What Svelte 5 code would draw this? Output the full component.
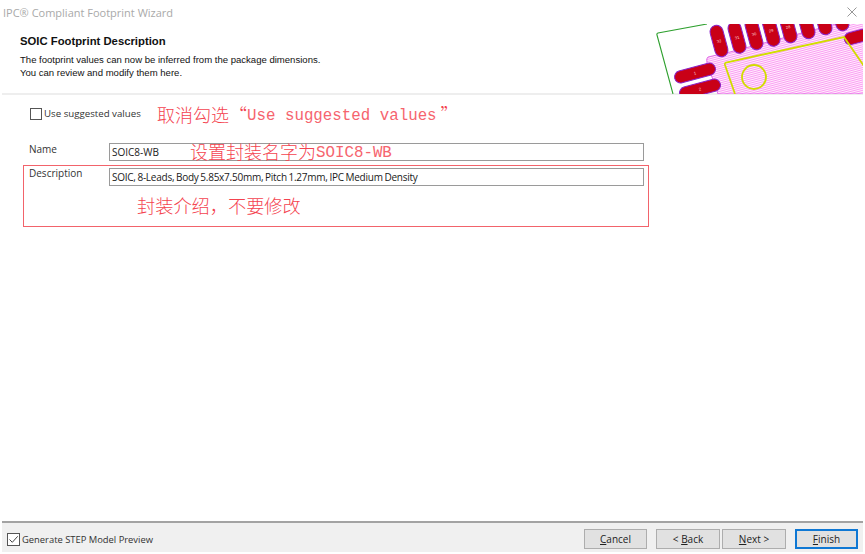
<script lang="ts">
  const topPads = [
    { x: 719, y: 41, n: '32' },
    { x: 737, y: 37.5, n: '31' },
    { x: 754, y: 34, n: '30' },
    { x: 771, y: 30.5, n: '29' },
    { x: 788, y: 27, n: '28' },
    { x: 806, y: 23, n: '' },
    { x: 823, y: 19, n: '' },
    { x: 840, y: 15, n: '' },
  ]
  const leftPads = [
    { x: 695, y: 73, n: '1' },
    { x: 700, y: 89, n: '2' },
  ]
</script>

<div class="window">
  <header class="head">
    <div class="head-text">
      <div class="title-bar">IPC® Compliant Footprint Wizard</div>
      <div class="head-copy">
        <h1>SOIC Footprint Description</h1>
        <p>The footprint values can now be inferred from the package dimensions.</p>
        <p>You can review and modify them here.</p>
      </div>
    </div>
    <div class="head-side">
      <svg class="close" width="10" height="10" viewBox="0 0 10 10">
        <path d="M0.5 0.5 L9.5 9.5 M9.5 0.5 L0.5 9.5" stroke="#8c8c8c" stroke-width="0.9" fill="none" />
      </svg>
      <svg class="art" width="208" height="70" viewBox="655 24 208 70">
        <defs>
          <pattern id="hatch" width="2" height="2" patternUnits="userSpaceOnUse" patternTransform="rotate(-15)">
            <rect width="2" height="2" fill="#fff0fd" />
            <path d="M0 0.5 H2" stroke="#fb9df3" stroke-width="1" />
          </pattern>
        </defs>
        <path d="M707 24 L658 33 Q656.500 33.500 657 35 L673 94" fill="none" stroke="#2ea02e" stroke-width="1.100" />
        <path d="M708 57 L730 52 L870 15 L870 94 L718 94 L707 63 Q706 58 708 57 Z" fill="url(#hatch)" stroke="#d84fe0" stroke-width="0.800" />
        {#each topPads as p}
          <g transform="translate({p.x} {p.y}) rotate(-15)">
            <rect x="-6.500" y="-16" width="13" height="32" rx="6.500" fill="#c90017" stroke="#8a22c8" stroke-width="1" />
            {#if p.n}<text class="pin" y="1.500" text-anchor="middle">{p.n}</text>{/if}
          </g>
        {/each}
        <g transform="translate(860 36) rotate(-15)">
          <rect x="-16" y="-6" width="32" height="12" rx="6" fill="#c90017" stroke="#8a22c8" stroke-width="1" />
        </g>
        {#each leftPads as p}
          <g transform="translate({p.x} {p.y}) rotate(-15)">
            <rect x="-21" y="-6" width="42" height="12" rx="6" fill="#c90017" stroke="#8a22c8" stroke-width="1" />
            <text class="pin" y="1.500" text-anchor="middle">{p.n}</text>
          </g>
        {/each}
        <path d="M735 94 L725 65 Q724.500 63 726 62.500 L844 37 L864 66" fill="none" stroke="#d2dc00" stroke-width="1.800" />
        <circle cx="754" cy="77" r="12" fill="none" stroke="#d2dc00" stroke-width="1.800" />
      </svg>
    </div>
  </header>

  <main class="body">
    <label class="suggest"><span class="box"></span>Use suggested values</label>
    <div class="field name-field">
      <span class="field-label">Name</span>
      <div class="input">SOIC8-WB</div>
    </div>
    <div class="field desc-field">
      <span class="field-label">Description</span>
      <div class="input tight">SOIC, 8-Leads, Body 5.85x7.50mm, Pitch 1.27mm, IPC Medium Density</div>
    </div>

    <div class="red-box"></div>
    <span class="note note-a" lang="zh-CN">取消勾选“<span class="latin">Use suggested values</span><span class="end-quote">”</span></span>
    <span class="note note-b" lang="zh-CN">设置封装名字为<span class="latin">SOIC8-WB</span></span>
    <span class="note note-c" lang="zh-CN">封装介绍，不要修改</span>
  </main>

  <footer class="foot">
    <label class="step">
      <span class="box">
        <svg width="11" height="11" viewBox="0 0 11 11">
          <path d="M1.500 5.500 L4.300 8.300 L9.700 2.300" fill="none" stroke="#444" stroke-width="1" />
        </svg>
      </span>
      Generate STEP Model Preview
    </label>
    <div class="buttons">
      <button class="btn narrow"><u>C</u>ancel</button>
      <div class="nav">
        <button class="btn">&lt; <u>B</u>ack</button>
        <button class="btn"><u>N</u>ext &gt;</button>
      </div>
      <button class="btn narrow primary"><u>F</u>inish</button>
    </div>
  </footer>
</div>

<style>
  :global(body) {
    margin: 0;
    background: #fff;
  }

  .window {
    width: 865px;
    height: 554px;
    box-sizing: border-box;
    padding: 0 2px 2px;
    display: flex;
    flex-direction: column;
    font-family: 'Open Sans', 'Noto Sans', sans-serif;
    font-size: 10px;
    color: #222;
    overflow: hidden;
  }

  .head {
    height: 95px;
    box-sizing: border-box;
    border-bottom: 2px solid #eee;
    display: flex;
    justify-content: space-between;
    flex-shrink: 0;
  }

  .head-text {
    display: flex;
    flex-direction: column;
  }

  .title-bar {
    height: 24px;
    line-height: 25px;
    padding-left: 1px;
    font-size: 11px;
    color: #a9a9a9;
  }

  .head-copy {
    padding: 10px 0 0 18px;
    font-family: 'Liberation Sans', Arial, sans-serif;
    color: #111;
  }

  h1 {
    margin: 0 0 5px;
    font-size: 11.300px;
    line-height: 14px;
    font-weight: 700;
  }

  p {
    margin: 0;
    font-size: 9.550px;
    line-height: 13px;
  }

  .head-side {
    width: 208px;
    display: flex;
    flex-direction: column;
    align-items: flex-end;
  }

  .close {
    margin: 7px 6px 7px 0;
    flex-shrink: 0;
  }

  .art {
    display: block;
    flex-shrink: 0;
  }

  .pin {
    font-family: 'Liberation Sans', Arial, sans-serif;
    font-size: 4px;
    fill: #ffd8d8;
  }

  .body {
    position: relative;
    flex: 1;
    padding: 12px 0 0 27px;
  }

  .suggest,
  .step {
    display: flex;
    align-items: center;
    gap: 2px;
    color: #333;
  }

  .suggest {
    height: 14px;
    margin-left: 1px;
    font-size: 9.700px;
    line-height: 12px;
  }

  .box {
    width: 10px;
    height: 10px;
    border: 1px solid #555;
    background: #fff;
    display: block;
    flex-shrink: 0;
  }

  .box svg {
    display: block;
  }

  .field {
    display: grid;
    grid-template-columns: 80px 535px;
  }

  .name-field {
    margin-top: 22px;
  }

  .desc-field {
    margin-top: 7px;
  }

  .desc-field .field-label {
    margin-top: -1px;
  }

  .field-label {
    line-height: 13px;
    color: #333;
  }

  .input {
    height: 18px;
    box-sizing: border-box;
    border: 1px solid #9a9a9a;
    border-right-width: 1.500px;
    border-bottom-width: 1.500px;
    background: #fff;
    line-height: 17px;
    padding-left: 2px;
    color: #1a1a1a;
    white-space: nowrap;
  }

  .tight {
    letter-spacing: -0.25px;
    word-spacing: -0.6px;
  }

  .red-box {
    position: absolute;
    left: 21px;
    top: 70px;
    width: 624px;
    height: 60px;
    border: 1px solid #f2636b;
    pointer-events: none;
  }

  .note {
    position: absolute;
    font-family: 'Noto Sans CJK SC', sans-serif;
    font-weight: 300;
    font-size: 18px;
    color: #f4434f;
    white-space: nowrap;
    line-height: 22px;
  }

  .latin {
    font-family: 'Liberation Mono', monospace;
    font-size: 15.800px;
    vertical-align: 2px;
    color: #f6646e;
  }

  .end-quote {
    margin-left: 4px;
  }

  .note-a {
    left: 155px;
    top: 8px;
  }

  .note-b {
    left: 188px;
    top: 45px;
  }

  .note-c {
    left: 135px;
    top: 99px;
    font-size: 18.200px;
  }

  .foot {
    height: 31px;
    box-sizing: border-box;
    border-top: 2px solid #a3a3a3;
    background: #f0f0f0;
    display: flex;
    align-items: center;
    justify-content: space-between;
    padding: 3px 5px 0 5px;
    flex-shrink: 0;
  }

  .step {
    gap: 2px;
    font-size: 9.400px;
  }

  .step .box {
    width: 11px;
    height: 11px;
  }

  .buttons {
    display: flex;
    gap: 9px;
  }

  .nav {
    display: flex;
    gap: 2px;
  }

  .btn {
    width: 64px;
    height: 20px;
    box-sizing: border-box;
    padding: 0;
    border: 1px solid #adadad;
    background: #e1e1e1;
    font: inherit;
    color: #222;
    line-height: 17px;
  }

  .narrow {
    width: 63px;
  }

  .primary {
    border: 2px solid #0f78d4;
  }
</style>
